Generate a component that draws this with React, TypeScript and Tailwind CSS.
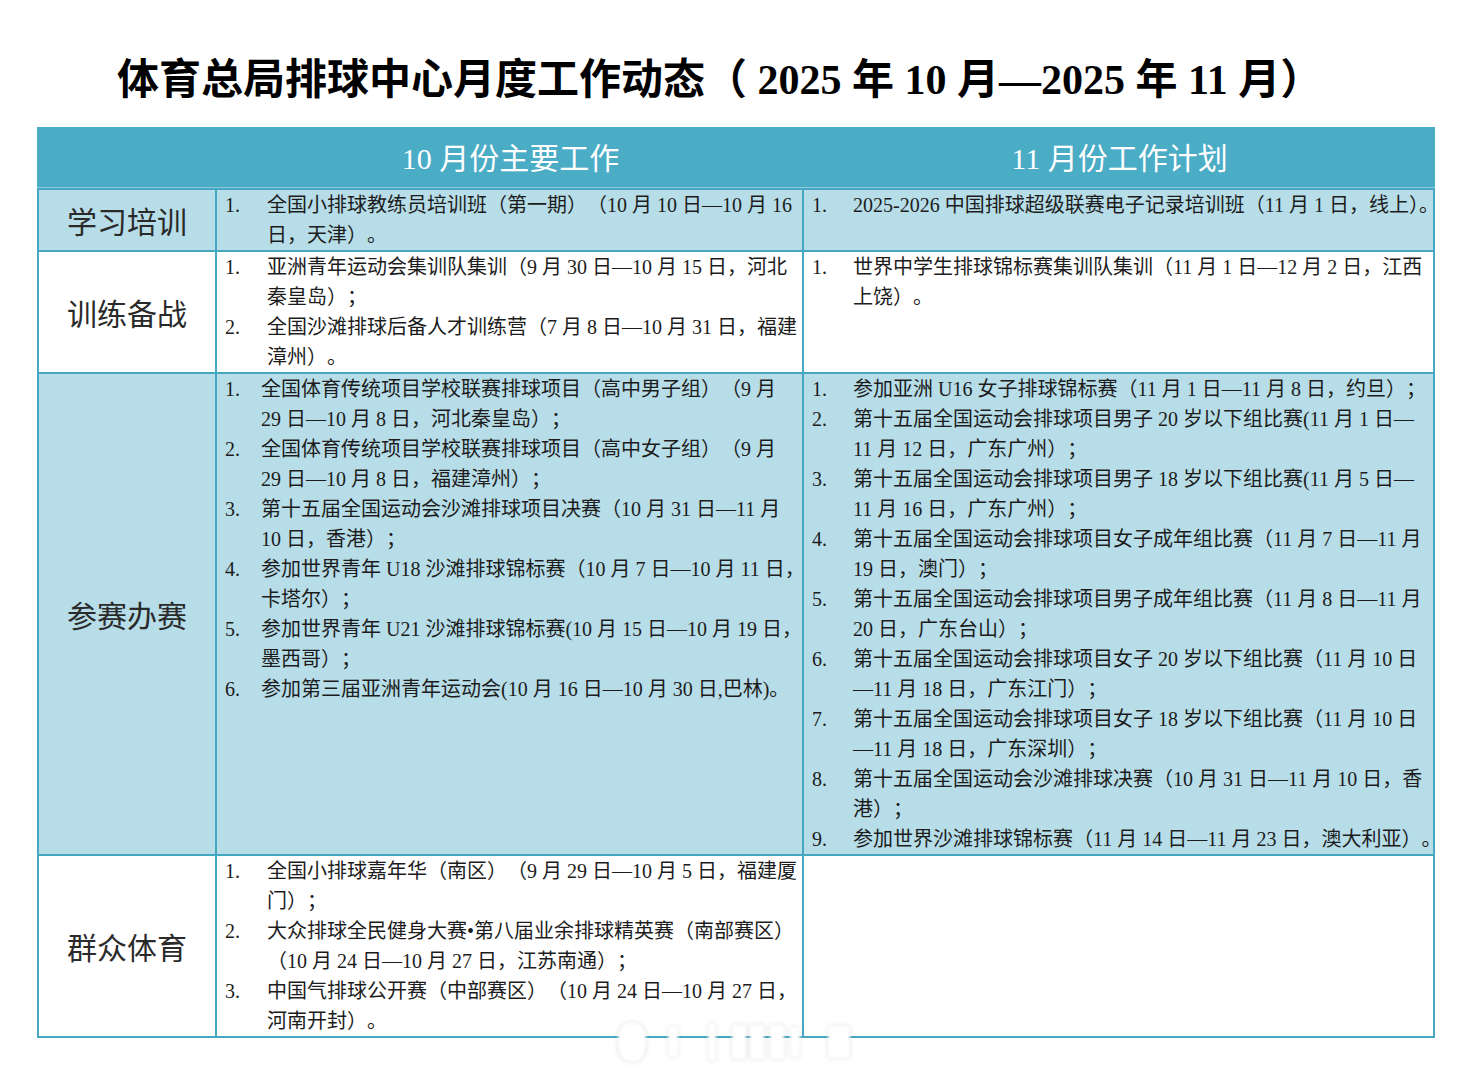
import React from 'react'

interface Row {
  label: string
  bg: string
  left: string[][]
  right: string[][]
  leftNum: string
  tightRight?: boolean
}

const rows: Row[] = [
  {
    label: '学习培训',
    bg: 'bg-[#b7dde8]',
    leftNum: 'w-[42px]',
    tightRight: true,
    left: [['全国小排球教练员培训班（第一期）（10 月 10 日—10 月 16', '日，天津）。']],
    right: [['2025-2026 中国排球超级联赛电子记录培训班（11 月 1 日，线上）。']],
  },
  {
    label: '训练备战',
    bg: 'bg-white',
    leftNum: 'w-[42px]',
    left: [
      ['亚洲青年运动会集训队集训（9 月 30 日—10 月 15 日，河北', '秦皇岛）；'],
      ['全国沙滩排球后备人才训练营（7 月 8 日—10 月 31 日，福建', '漳州）。'],
    ],
    right: [['世界中学生排球锦标赛集训队集训（11 月 1 日—12 月 2 日，江西', '上饶）。']],
  },
  {
    label: '参赛办赛',
    bg: 'bg-[#b7dde8]',
    leftNum: 'w-[36px]',
    left: [
      ['全国体育传统项目学校联赛排球项目（高中男子组）（9 月', '29 日—10 月 8 日，河北秦皇岛）；'],
      ['全国体育传统项目学校联赛排球项目（高中女子组）（9 月', '29 日—10 月 8 日，福建漳州）；'],
      ['第十五届全国运动会沙滩排球项目决赛（10 月 31 日—11 月', '10 日，香港）；'],
      ['参加世界青年 U18 沙滩排球锦标赛（10 月 7 日—10 月 11 日，', '卡塔尔）；'],
      ['参加世界青年 U21 沙滩排球锦标赛(10 月 15 日—10 月 19 日，', '墨西哥）；'],
      ['参加第三届亚洲青年运动会(10 月 16 日—10 月 30 日,巴林)。'],
    ],
    right: [
      ['参加亚洲 U16 女子排球锦标赛（11 月 1 日—11 月 8 日，约旦）；'],
      ['第十五届全国运动会排球项目男子 20 岁以下组比赛(11 月 1 日—', '11 月 12 日，广东广州）；'],
      ['第十五届全国运动会排球项目男子 18 岁以下组比赛(11 月 5 日—', '11 月 16 日，广东广州）；'],
      ['第十五届全国运动会排球项目女子成年组比赛（11 月 7 日—11 月', '19 日，澳门）；'],
      ['第十五届全国运动会排球项目男子成年组比赛（11 月 8 日—11 月', '20 日，广东台山）；'],
      ['第十五届全国运动会排球项目女子 20 岁以下组比赛（11 月 10 日', '—11 月 18 日，广东江门）；'],
      ['第十五届全国运动会排球项目女子 18 岁以下组比赛（11 月 10 日', '—11 月 18 日，广东深圳）；'],
      ['第十五届全国运动会沙滩排球决赛（10 月 31 日—11 月 10 日，香', '港）；'],
      ['参加世界沙滩排球锦标赛（11 月 14 日—11 月 23 日，澳大利亚）。'],
    ],
  },
  {
    label: '群众体育',
    bg: 'bg-white',
    leftNum: 'w-[42px]',
    left: [
      ['全国小排球嘉年华（南区）（9 月 29 日—10 月 5 日，福建厦', '门）；'],
      ['大众排球全民健身大赛•第八届业余排球精英赛（南部赛区）', '（10 月 24 日—10 月 27 日，江苏南通）；'],
      ['中国气排球公开赛（中部赛区）（10 月 24 日—10 月 27 日，', '河南开封）。'],
    ],
    right: [],
  },
]

export default function App() {
  return (
    <div className="relative h-[1080px] w-[1478px] bg-white text-[#1c1c1c] [text-spacing-trim:space-all]">
      {/* Title */}
      <h1 className="pl-[117px] pt-[58px] text-[42px] leading-[44px] font-bold text-black whitespace-nowrap font-['Liberation_Serif','Noto_Sans_CJK_SC',serif]">
        体育总局排球中心月度工作动态（ 2025 年 10 月—2025 年 11 月）
      </h1>

      {/* Table */}
      <div className="mt-[25px] ml-[37px] grid w-[1398px] grid-cols-[176px_585px_629px] gap-[2px] bg-[#46a7c2] p-[2px] font-['Liberation_Serif','Noto_Sans_CJK_SC',serif]">
        {/* Header */}
        <div className="col-span-3 -mx-[2px] -mt-[2px] grid h-[61px] grid-cols-[180px_587px_631px] border-b border-[#8fcadb] bg-[#4bacc6] pt-[2px] text-[30px] text-white">
          <div />
          <div className="flex items-center justify-center">10 月份主要工作</div>
          <div className="flex items-center justify-center">11 月份工作计划</div>
        </div>

        {rows.map((row) => (
          <React.Fragment key={row.label}>
            <div className={`${row.bg} flex items-center justify-center text-[30px] text-[#2a2a2a] font-['Noto_Sans_CJK_SC',sans-serif]`}>
              {row.label}
            </div>
            <div className={row.bg}>
              <ItemList items={row.left} numW={row.leftNum} />
            </div>
            <div className={`${row.bg} ${row.tightRight ? '[text-spacing-trim:normal]' : ''}`}>
              <ItemList items={row.right} numW="w-[41px]" />
            </div>
          </React.Fragment>
        ))}
      </div>

      {/* watermark */}
      <div className="absolute left-[618px] top-[1020px] flex h-[44px] items-center blur-[1.5px]">
        <div className="h-[40px] w-[28px] rounded-full bg-white shadow-[0_0_3px_rgba(0,0,0,0.28)]" />
        <div className="ml-[22px] h-[30px] w-[10px] bg-white shadow-[0_0_3px_rgba(0,0,0,0.22)]" />
        <div className="ml-[30px] h-[36px] w-[8px] bg-white shadow-[0_0_3px_rgba(0,0,0,0.22)]" />
        <div className="ml-[16px] h-[34px] w-[14px] bg-white shadow-[0_0_3px_rgba(0,0,0,0.22)]" />
        <div className="ml-[4px] h-[34px] w-[14px] bg-white shadow-[0_0_3px_rgba(0,0,0,0.22)]" />
        <div className="ml-[6px] h-[34px] w-[14px] bg-white shadow-[0_0_3px_rgba(0,0,0,0.22)]" />
        <div className="ml-[6px] h-[30px] w-[10px] bg-white shadow-[0_0_3px_rgba(0,0,0,0.22)]" />
        <div className="ml-[28px] h-[32px] w-[22px] bg-white shadow-[0_0_3px_rgba(0,0,0,0.22)]" />
      </div>
    </div>
  )
}

function ItemList({ items, numW }: { items: string[][]; numW: string }) {
  return (
    <div className="pl-2 text-[20px] leading-[30px]">
      {items.map((lines, i) => (
        <div key={i} className="flex">
          <span className={`${numW} shrink-0`}>{i + 1}.</span>
          <div className="min-w-0 flex-1">
            {lines.map((ln, j) => (
              <div key={j} className="whitespace-nowrap">
                {ln}
              </div>
            ))}
          </div>
        </div>
      ))}
    </div>
  )
}
